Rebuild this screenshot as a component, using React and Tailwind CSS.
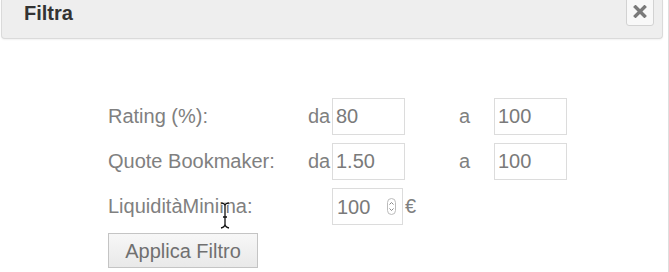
import React from "react";

function Spinner() {
  return (
    <svg width="9" height="17" viewBox="0 0 9 17" className="shrink-0">
      <rect x="0.5" y="0.5" width="8" height="16" rx="4" fill="#fff" stroke="#bbb" />
      <path d="M2.5 6.5 L4.5 4.5 L6.5 6.5" fill="none" stroke="#888" strokeWidth="1" />
      <path d="M2.5 10.5 L4.5 12.5 L6.5 10.5" fill="none" stroke="#888" strokeWidth="1" />
    </svg>
  );
}

export default function App() {
  const label = "text-[20px] leading-[37px] text-[#808080]";
  const box =
    "h-[37px] w-[73px] border border-[#dcdcdc] bg-white px-[3px] text-[20px] text-[#7a7a7a] outline-none";
  return (
    <div
      className="relative h-[272px] w-[669px] overflow-hidden bg-white border-r border-[#dedede]"
      style={{ fontFamily: '"Liberation Sans", Arial, sans-serif' }}
    >
      {/* header */}
      <div className="ml-[1px] flex h-[39px] w-[662px] items-start justify-between rounded-b-[4px] border-x border-b border-[#dadada] bg-[#eeeeee] shadow-[0_1px_2px_rgba(0,0,0,0.06)]">
        <span className="pl-[22px] pt-[3px] text-[20px] font-bold leading-[20px] text-[#333]">
          Filtra
        </span>
        <button
          type="button"
          className="mr-[8px] -mt-[3px] flex h-[29px] w-[28px] items-center justify-center rounded-[3px] border border-[#d2d2d2] bg-[#f8f8f8]"
        >
          <svg width="14" height="13" viewBox="0 0 14 13">
            <path d="M2.5 2 L11.5 11 M11.5 2 L2.5 11" stroke="#7a7a7a" strokeWidth="3.4" strokeLinecap="square" />
          </svg>
        </button>
      </div>

      {/* form */}
      <div className="ml-[108px] mt-[59px] flex flex-col gap-[8px]">
        <div className="flex">
          <span className={`${label} w-[200px]`}>Rating (%):</span>
          <span className={`${label} w-[24px]`}>da</span>
          <input readOnly value="80" className={box} />
          <span className={`${label} ml-[54px] w-[35px]`}>a</span>
          <input readOnly value="100" className={box} />
        </div>
        <div className="flex">
          <span className={`${label} w-[200px]`}>Quote Bookmaker:</span>
          <span className={`${label} w-[24px]`}>da</span>
          <input readOnly value="1.50" className={box} />
          <span className={`${label} ml-[54px] w-[35px]`}>a</span>
          <input readOnly value="100" className={box} />
        </div>
        <div className="flex">
          <span className={`${label} w-[224px]`}>LiquiditàMinima:</span>
          <div className="flex h-[37px] w-[71px] items-center border border-[#dcdcdc] bg-white pl-[4px] pr-[6px]">
            <input readOnly value="100" className="w-[45px] text-[20px] text-[#7a7a7a] outline-none" />
            <span className="ml-auto">
              <Spinner />
            </span>
          </div>
          <span className={`${label} ml-[2px]`}>€</span>
        </div>
        <div>
          <button
            type="button"
            className="h-[35px] w-[150px] border border-[#c4c4c4] bg-gradient-to-b from-[#f7f7f7] to-[#e9e9e9] text-[20px] text-[#707070]"
          >
            Applica Filtro
          </button>
        </div>
      </div>

      {/* text cursor */}
      <svg
        width="12"
        height="27"
        viewBox="0 0 12 27"
        className="absolute left-[219px] top-[202px]"
      >
        <path
          d="M2 1 Q6 1 6 4 Q6 1 10 1 M6 4 L6 22 Q6 25 2 26 M6 22 Q6 25 10 26 M4 15 L8 15"
          fill="none"
          stroke="#fff"
          strokeWidth="3"
        />
        <path
          d="M2 1 Q6 1 6 4 Q6 1 10 1 M6 4 L6 22 Q6 25 2 26 M6 22 Q6 25 10 26 M4 15 L8 15"
          fill="none"
          stroke="#111"
          strokeWidth="1.3"
        />
      </svg>
    </div>
  );
}
